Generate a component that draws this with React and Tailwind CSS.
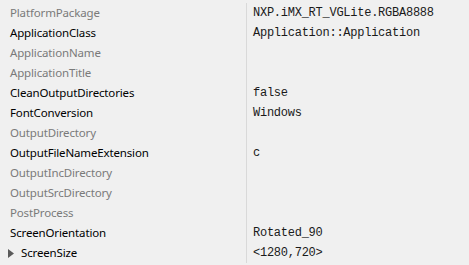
const rows = [
  { name: 'PlatformPackage', value: 'NXP.iMX_RT_VGLite.RGBA8888', set: false },
  { name: 'ApplicationClass', value: 'Application::Application', set: true },
  { name: 'ApplicationName', value: '', set: false },
  { name: 'ApplicationTitle', value: '', set: false },
  { name: 'CleanOutputDirectories', value: 'false', set: true },
  { name: 'FontConversion', value: 'Windows', set: true },
  { name: 'OutputDirectory', value: '', set: false },
  { name: 'OutputFileNameExtension', value: 'c', set: true },
  { name: 'OutputIncDirectory', value: '', set: false },
  { name: 'OutputSrcDirectory', value: '', set: false },
  { name: 'PostProcess', value: '', set: false },
  { name: 'ScreenOrientation', value: 'Rotated_90', set: true },
  { name: 'ScreenSize', value: '<1280,720>', set: true, expandable: true },
];

export default function App() {
  return (
    <div className="w-[469px] h-[265px] bg-[#f0f0f0] overflow-hidden pt-[3px]">
      {rows.map((row) => (
        <div key={row.name} className="flex h-5 items-center">
          <div
            className={`w-[246px] flex items-center h-full text-[11.5px] tracking-[-0.15px] font-['Noto_Sans',sans-serif] ${
              row.set ? 'text-black' : 'text-[#7a7a7a]'
            } ${row.expandable ? 'pl-[8px]' : 'pl-[10px]'}`}
          >
            {row.expandable && (
              <svg width="6" height="9" viewBox="0 0 6 9" className="mr-[7px]">
                <polygon points="0,0 6,4.5 0,9" fill="#5a5a5a" />
              </svg>
            )}
            <span className="leading-none">{row.name}</span>
          </div>
          <div className="w-px h-full bg-[#d9d9d9]" />
          <div className="flex-1 pl-[6px] text-[12px] tracking-[-0.25px] text-[#1a1a1a] font-['Liberation_Mono',monospace] leading-none">
            {row.value}
          </div>
        </div>
      ))}
    </div>
  );
}
